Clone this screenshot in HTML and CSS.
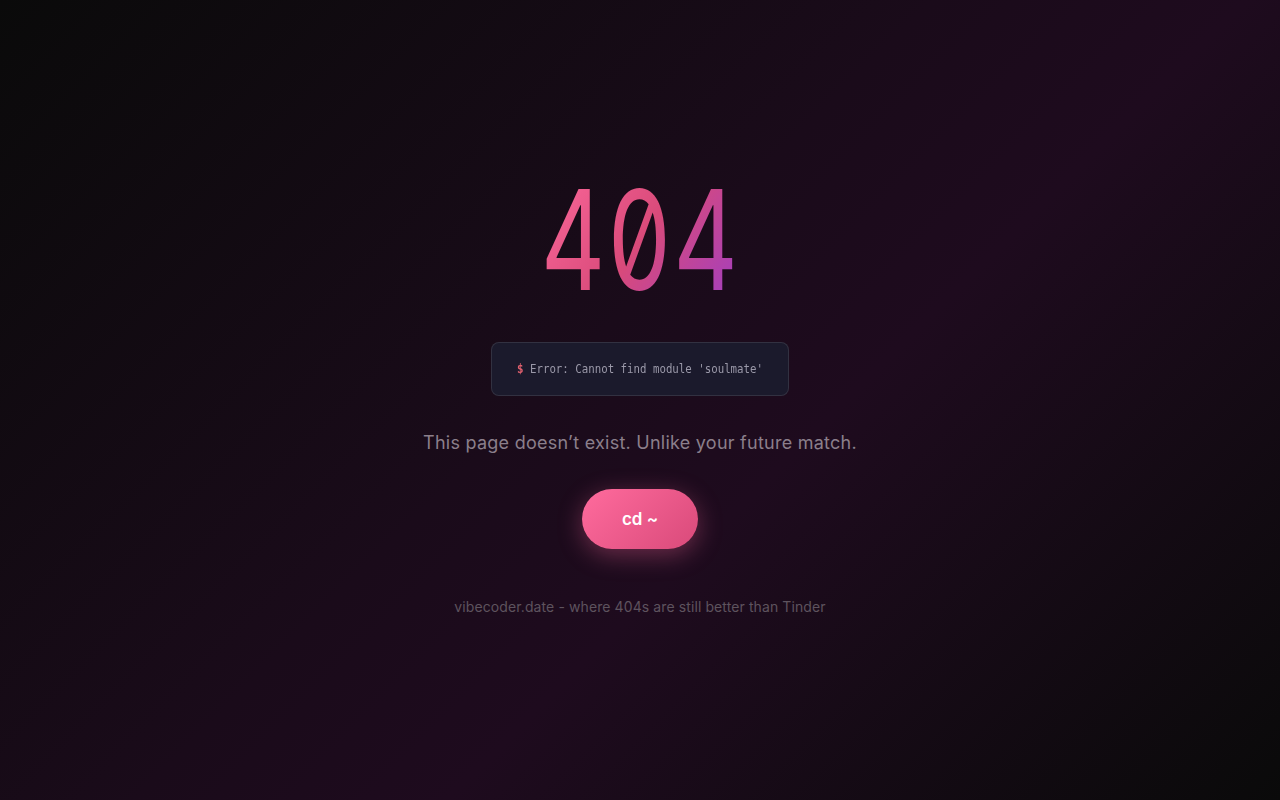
FILE: index.html
```html
<!DOCTYPE html>
<html lang="en">
<head>
  <meta charset="UTF-8" />
  <meta name="viewport" content="width=device-width, initial-scale=1.0"/>
  <title>404 - vibecoder.date</title>
  <link rel="stylesheet" href="styles.css">
</head>
<body>
  <main class="pagina">
    <h1 class="codigo">404</h1>

    <div class="terminal">
      <span class="linea"><span class="prompt">$</span> Error: Cannot find module 'soulmate'</span>
    </div>

    <p class="mensaje">This page doesn’t exist. Unlike your future match.</p>

    <a class="boton" href="#">cd ~</a>

    <p class="pie">vibecoder.date - where 404s are still better than Tinder</p>
  </main>
</body>
</html>
```

FILE: styles.css
```css
html, body {
  height: 100%;
}

body {
  margin: 0;
  font-family: 'Inter', 'Open Sans', sans-serif;
  background: linear-gradient(135deg, #0a0a0a 0%, #1a0b1a 45%, #1e0b1e 60%, #0a0a0a 100%);
  color: #8a7f8a;
}

.pagina {
  min-height: 100%;
  display: flex;
  flex-direction: column;
  align-items: center;
  padding-top: 160px;
  box-sizing: border-box;
}

.codigo {
  margin: 0;
  font-family: 'Inter', sans-serif;
  font-feature-settings: "zero" 1, "tnum" 1;
  font-weight: 400;
  font-size: 139px;
  line-height: 160px;
  letter-spacing: 2px;
  transform: scaleX(0.72);
  background: linear-gradient(135deg, #ff6b9d 0%, #d94a7a 50%, #9b3dc9 100%);
  -webkit-background-clip: text;
  background-clip: text;
  color: transparent;
}

.terminal {
  margin-top: 22px;
  padding: 18px 0;
  width: 296px;
  text-align: center;
  background: #1b1a2c;
  border: 1px solid rgba(255,255,255,0.1);
  border-radius: 8px;
  font-family: 'DejaVu Sans Mono', monospace;
  font-size: 12.5px;
  line-height: 16px;
  color: #9a98a8;
}

.linea {
  display: inline-block;
  white-space: nowrap;
  transform: scaleX(0.86);
}

.prompt {
  color: #e0606e;
  font-weight: bold;
}

.mensaje {
  margin: 36px 0 0;
  font-size: 18px;
  letter-spacing: 0.25px;
  color: #8b7f8b;
}

.boton {
  margin-top: 36px;
  display: inline-block;
  padding: 20px 40px;
  border-radius: 30px;
  background: linear-gradient(135deg, #ff6b9d, #d94a7a);
  box-shadow: 0 6px 24px rgba(255, 107, 157, 0.35);
  color: white;
  font-weight: 600;
  font-size: 17px;
  line-height: 20px;
  text-decoration: none;
}

.pie {
  margin: 49px 0 0;
  font-size: 14px;
  letter-spacing: 0.1px;
  color: #5e535e;
}
```
